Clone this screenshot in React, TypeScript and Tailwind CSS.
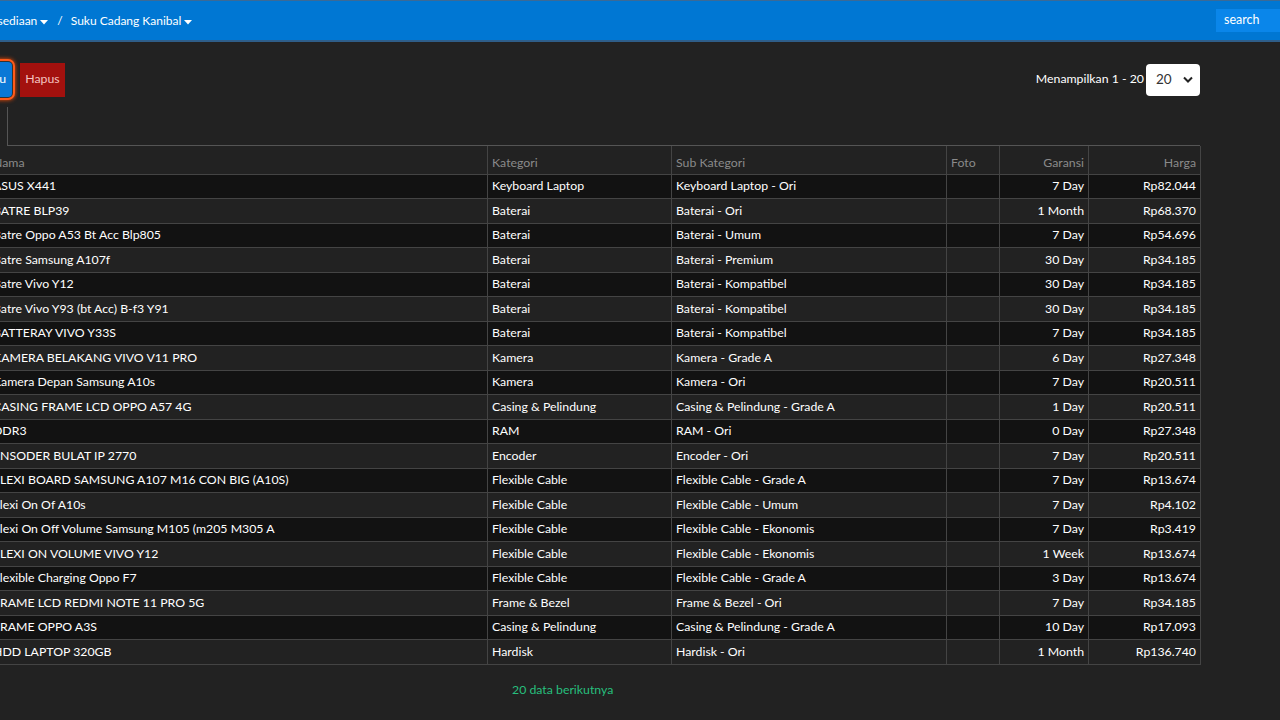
import React from "react";

const rows: [string, string, string, string, string][] = [
  ["ASUS X441", "Keyboard Laptop", "Keyboard Laptop - Ori", "7 Day", "Rp82.044"],
  ["BATRE BLP39", "Baterai", "Baterai - Ori", "1 Month", "Rp68.370"],
  ["Batre Oppo A53 Bt Acc Blp805", "Baterai", "Baterai - Umum", "7 Day", "Rp54.696"],
  ["Batre Samsung A107f", "Baterai", "Baterai - Premium", "30 Day", "Rp34.185"],
  ["Batre Vivo Y12", "Baterai", "Baterai - Kompatibel", "30 Day", "Rp34.185"],
  ["Batre Vivo Y93 (bt Acc) B-f3 Y91", "Baterai", "Baterai - Kompatibel", "30 Day", "Rp34.185"],
  ["BATTERAY VIVO Y33S", "Baterai", "Baterai - Kompatibel", "7 Day", "Rp34.185"],
  ["KAMERA BELAKANG VIVO V11 PRO", "Kamera", "Kamera - Grade A", "6 Day", "Rp27.348"],
  ["Kamera Depan Samsung A10s", "Kamera", "Kamera - Ori", "7 Day", "Rp20.511"],
  ["CASING FRAME LCD OPPO A57 4G", "Casing & Pelindung", "Casing & Pelindung - Grade A", "1 Day", "Rp20.511"],
  ["DDR3", "RAM", "RAM - Ori", "0 Day", "Rp27.348"],
  ["ENSODER BULAT IP 2770", "Encoder", "Encoder - Ori", "7 Day", "Rp20.511"],
  ["FLEXI BOARD SAMSUNG A107 M16 CON BIG (A10S)", "Flexible Cable", "Flexible Cable - Grade A", "7 Day", "Rp13.674"],
  ["Flexi On Of A10s", "Flexible Cable", "Flexible Cable - Umum", "7 Day", "Rp4.102"],
  ["Flexi On Off Volume Samsung M105 (m205 M305 A", "Flexible Cable", "Flexible Cable - Ekonomis", "7 Day", "Rp3.419"],
  ["FLEXI ON VOLUME VIVO Y12", "Flexible Cable", "Flexible Cable - Ekonomis", "1 Week", "Rp13.674"],
  ["Flexible Charging Oppo F7", "Flexible Cable", "Flexible Cable - Grade A", "3 Day", "Rp13.674"],
  ["FRAME LCD REDMI NOTE 11 PRO 5G", "Frame & Bezel", "Frame & Bezel - Ori", "7 Day", "Rp34.185"],
  ["FRAME OPPO A3S", "Casing & Pelindung", "Casing & Pelindung - Grade A", "10 Day", "Rp17.093"],
  ["HDD LAPTOP 320GB", "Hardisk", "Hardisk - Ori", "1 Month", "Rp136.740"],
];

function Caret() {
  return (
    <svg width="8" height="5" viewBox="0 0 8 5" className="ml-[3px] mt-[2px]">
      <path d="M0 0 L8 0 L4 4.5 Z" fill="#ffffff" />
    </svg>
  );
}

export default function App() {
  return (
    <div
      className="min-h-[720px] w-[1280px] overflow-hidden bg-[#222222] text-[12.3px] text-[#eeeeee]"
      style={{ fontFamily: "Lato, 'Noto Sans', sans-serif" }}
    >
      {/* Navbar */}
      <div className="flex h-[42px] items-center justify-between border-t border-b-[2px] border-t-[#3b6a96] border-b-[#2f5e89] bg-[#0077d3] text-[12px]">
        <div className="-ml-[20px] mt-[1px] flex items-center text-white">
          <span className="flex items-center">
            Persediaan
            <Caret />
          </span>
          <span className="ml-[9px] mr-[8px]">/</span>
          <span className="flex items-center">
            Suku Cadang Kanibal
            <Caret />
          </span>
        </div>
        <div className="flex h-[23px] w-[64px] items-center bg-[#0a86ea] pl-[8px] text-[12.5px] text-white">search</div>
      </div>

      {/* content */}
      <div className="-ml-[12px] w-[1212px]">
        <div className="mt-[20px] flex items-center justify-between">
          <div className="flex items-center">
            <div className="-ml-[21px] flex h-[35px] w-[45px] items-center justify-end rounded-[4px] bg-[#0a78d6] pr-[6px] text-white shadow-[0_0_0_1px_#333,0_0_0_3px_#ff5a1a,0_0_4px_3px_#ff4d00]">
              Baru
            </div>
            <div className="ml-[8px] flex h-[34px] w-[45px] items-center justify-center bg-[#a3110e] text-[#f4c4c1]">
              Hapus
            </div>
          </div>
          <div className="flex items-center">
            <span className="mr-[2px] text-white">Menampilkan 1 - 20</span>
            <div className="flex h-[32px] w-[54px] items-center justify-between rounded-[4px] bg-white pl-[10px] pr-[7px] text-[13.5px] text-[#333]">
              <span>20</span>
              <svg width="10" height="7" viewBox="0 0 10 7">
                <path d="M1 1.5 L5 5.5 L9 1.5" stroke="#222" strokeWidth="2" fill="none" />
              </svg>
            </div>
          </div>
        </div>

        <div className="ml-[19px] mt-[10px] h-[39px] border-b border-l border-[#555555]" />

        <table className="w-[1212px] table-fixed border-collapse">
          <colgroup>
            <col className="w-[499px]" />
            <col className="w-[184px]" />
            <col className="w-[275px]" />
            <col className="w-[53px]" />
            <col className="w-[89px]" />
            <col className="w-[112px]" />
          </colgroup>
          <thead>
            <tr className="h-[28px] bg-[#222222] text-[#8a8a8a]">
              <th className="border-x border-[#444] px-[4px] pt-[6px] pb-0 text-left font-normal">Nama</th>
              <th className="border-x border-[#444] px-[4px] pt-[6px] pb-0 text-left font-normal">Kategori</th>
              <th className="border-x border-[#444] px-[4px] pt-[6px] pb-0 text-left font-normal">Sub Kategori</th>
              <th className="border-x border-[#444] px-[4px] pt-[6px] pb-0 text-left font-normal">Foto</th>
              <th className="border-x border-[#444] px-[4px] pt-[6px] pb-0 text-right font-normal">Garansi</th>
              <th className="border-x border-[#444] px-[4px] pt-[6px] pb-0 text-right font-normal">Harga</th>
            </tr>
          </thead>
          <tbody>
            {rows.map((r, i) => (
              <tr key={i} className={`h-[24.5px] ${i % 2 === 0 ? "bg-[#121212]" : "bg-[#222222]"}`}>
                <td className="whitespace-nowrap border border-[#444] px-[4px] py-0 text-white">{r[0]}</td>
                <td className="whitespace-nowrap border border-[#444] px-[4px] py-0 text-white">{r[1]}</td>
                <td className="whitespace-nowrap border border-[#444] px-[4px] py-0 text-white">{r[2]}</td>
                <td className="border border-[#444] px-[4px] py-0"></td>
                <td className="whitespace-nowrap border border-[#444] px-[4px] py-0 text-right text-white">{r[3]}</td>
                <td className="whitespace-nowrap border border-[#444] px-[4px] py-0 text-right text-white">{r[4]}</td>
              </tr>
            ))}
          </tbody>
        </table>

        <div className="mt-[16px] pl-[524px] text-[#27bf7d]">20 data berikutnya</div>
      </div>
    </div>
  );
}
